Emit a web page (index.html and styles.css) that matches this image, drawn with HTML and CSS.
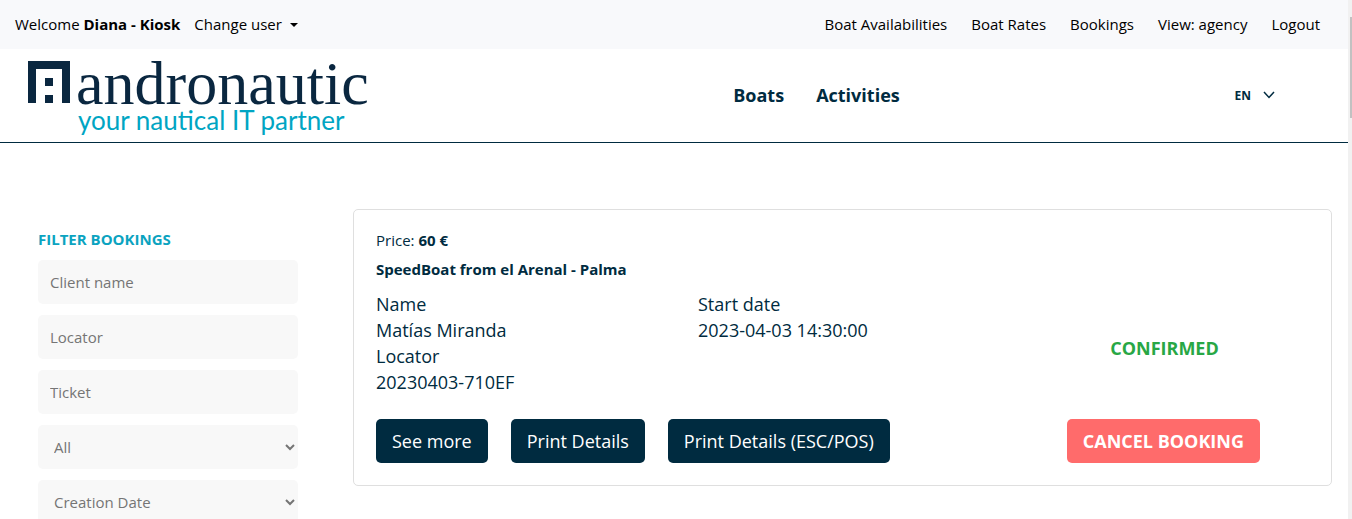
FILE: index.html
```html
<!DOCTYPE html>
<html lang="en">
<head>
<meta charset="utf-8">
<title>Andronautic - Bookings</title>
<link rel="stylesheet" href="styles.css">
</head>
<body>
<div class="shell">
  <div class="page">
    <div class="topbar">
      <div class="welcome">
        <span>Welcome <strong>Diana - Kiosk</strong></span>
        <button class="change-user" type="button">Change user <span class="caret"></span></button>
      </div>
      <nav class="top-links" aria-label="Account">
        <a href="#">Boat Availabilities</a>
        <a href="#">Boat Rates</a>
        <a href="#">Bookings</a>
        <a href="#">View: agency</a>
        <a href="#">Logout</a>
      </nav>
    </div>
    <header class="header">
      <a class="logo" href="#">
        <svg class="logo-mark" viewBox="0 0 42 42" aria-hidden="true">
          <path d="M0 0H42V42H34V8H8V42H0ZM17 17H25V25H17ZM17 34H25V42H17Z" fill="#0a2740"/>
        </svg>
        <span class="logo-text">
          <span class="logo-name">andronautic</span>
          <span class="logo-tag">your nautical IT partner</span>
        </span>
      </a>
      <nav class="main-nav" aria-label="Main">
        <a href="#">Boats</a>
        <a href="#">Activities</a>
      </nav>
      <div class="lang-area">
        <button class="lang" type="button">EN
          <svg class="chevron" viewBox="0 0 12 8" aria-hidden="true"><path d="M1 1L6 6.400L11 1" fill="none" stroke="#002b40" stroke-width="1.500"/></svg>
        </button>
      </div>
    </header>
    <main class="content">
      <form class="filters">
        <h2>FILTER BOOKINGS</h2>
        <input type="text" placeholder="Client name" aria-label="Client name">
        <input type="text" placeholder="Locator" aria-label="Locator">
        <input type="text" placeholder="Ticket" aria-label="Ticket">
        <select aria-label="Status"><option>All</option></select>
        <select aria-label="Sort by"><option>Creation Date</option></select>
      </form>
      <article class="card">
        <p class="price">Price: <strong>60 €</strong></p>
        <h3>SpeedBoat from el Arenal - Palma</h3>
        <div class="details">
          <div>
            <p>Name</p>
            <p>Matías Miranda</p>
            <p>Locator</p>
            <p>20230403-710EF</p>
          </div>
          <div>
            <p>Start date</p>
            <p>2023-04-03 14:30:00</p>
          </div>
          <strong class="status">CONFIRMED</strong>
        </div>
        <div class="actions">
          <div class="buttons">
            <button class="btn" type="button">See more</button>
            <button class="btn" type="button">Print Details</button>
            <button class="btn" type="button">Print Details (ESC/POS)</button>
          </div>
          <button class="btn btn-cancel" type="button">CANCEL BOOKING</button>
        </div>
      </article>
    </main>
  </div>
  <div class="scroll-track"><div class="scroll-thumb"></div></div>
</div>
</body>
</html>
```
FILE: styles.css
```css
* {
  box-sizing: border-box;
}

body {
  margin: 0;
  background: #fff;
  color: #002b40;
  font-family: "Open Sans", sans-serif;
  font-size: 15px;
}

a {
  color: inherit;
  text-decoration: none;
}

button,
input,
select {
  font: inherit;
  color: inherit;
  border: 0;
}

button {
  background: none;
  padding: 0;
  cursor: pointer;
}

h2,
h3,
p {
  margin: 0;
}

strong {
  font-weight: 700;
}

.shell {
  display: flex;
  height: 100vh;
  overflow: hidden;
}

.page {
  flex: 1;
  min-width: 0;
}

.scroll-track {
  width: 4px;
  padding: 17px 0 0 2px;
  background: #f1f1f1;
}

.scroll-thumb {
  height: 101px;
  background: #c1c1c1;
}

.topbar {
  display: flex;
  justify-content: space-between;
  align-items: center;
  padding: 14px 28px 14px 15px;
  background: #f8f9fb;
  color: #000;
  font-size: 15px;
  line-height: 21px;
}

.welcome {
  display: flex;
  gap: 14px;
}

.change-user {
  display: flex;
  align-items: center;
  gap: 8px;
}

.caret {
  border: 4px solid transparent;
  border-top-color: #000;
  border-bottom: 0;
}

.top-links {
  display: flex;
  gap: 24px;
}

.header {
  display: grid;
  grid-template-columns: 1fr auto 1fr;
  align-items: center;
  padding: 9px 73px 7px 28px;
  border-bottom: 1px solid #002b40;
}

.logo {
  display: flex;
  gap: 6px;
  padding-top: 3px;
}

.logo-mark {
  width: 42px;
  height: 42px;
}

.logo-text {
  display: flex;
  flex-direction: column;
}

.logo-name {
  font: 62px/44px "Liberation Serif", serif;
  color: #0a2740;
}

.logo-tag {
  padding-left: 2px;
  font: 26px/30px Lato, sans-serif;
  color: #00a5c3;
}

.main-nav {
  display: flex;
  gap: 32px;
  padding: 0 0 3px 330px;
  font-size: 18px;
  font-weight: 700;
}

.lang-area {
  display: flex;
  justify-content: flex-end;
  padding-bottom: 3px;
}

.lang {
  display: flex;
  align-items: center;
  gap: 12px;
  font-size: 12px;
  font-weight: 700;
}

.chevron {
  width: 12px;
  height: 8px;
}

.content {
  display: grid;
  grid-template-columns: 260px 1fr;
  align-items: start;
  gap: 55px;
  padding: 66px 16px 40px 38px;
}

.filters {
  display: flex;
  flex-direction: column;
  gap: 11px;
  padding-top: 20px;
}

.filters h2 {
  color: #0ba3c0;
  font-size: 15px;
  line-height: 20px;
}

.filters input,
.filters select {
  width: 100%;
  height: 44px;
  padding: 0 12px;
  border-radius: 5px;
  background: #f8f8f8;
  color: #757575;
}

.filters select {
  padding-right: 4px;
}

.filters input::placeholder {
  color: #757575;
}

.card {
  padding: 19px 22px 22px;
  border: 1px solid #dfdfdf;
  border-radius: 5px;
}

.price {
  font-size: 15px;
  line-height: 22px;
}

.card h3 {
  margin-top: 7px;
  font-size: 15px;
  line-height: 22px;
}

.details {
  display: grid;
  grid-template-columns: 300px 300px 1fr;
  column-gap: 22px;
  margin-top: 11px;
  font-size: 18px;
  line-height: 26px;
}

.status {
  align-self: center;
  justify-self: center;
  padding-top: 9px;
  color: #28a745;
}

.actions {
  display: flex;
  justify-content: space-between;
  margin-top: 24px;
  padding-right: 49px;
}

.buttons {
  display: flex;
  gap: 23px;
}

.btn {
  height: 44px;
  padding: 0 16px;
  border-radius: 5px;
  background: #002b40;
  color: #fff;
  font-size: 18px;
}

.btn-cancel {
  background: #ff6b6b;
  font-weight: 700;
}
```
